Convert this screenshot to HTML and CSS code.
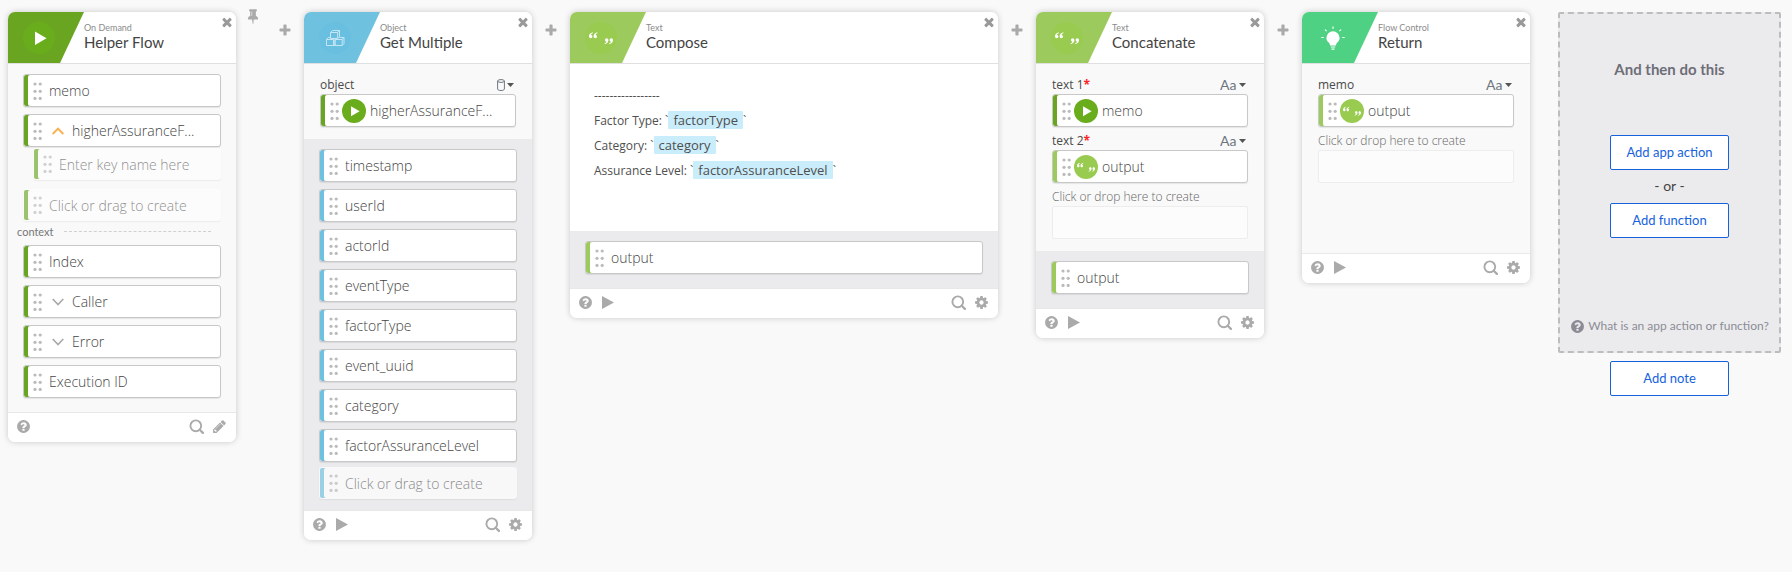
FILE: index.html
```html
<!DOCTYPE html>
<html lang="en">
<head>
<meta charset="utf-8">
<title>Helper Flow</title>
<link rel="stylesheet" href="styles.css">
</head>
<body>
<svg class="sprite" aria-hidden="true">
  <symbol id="close" viewBox="0 0 1792 1792"><path d="M1490 1322q0 40-28 68l-136 136q-28 28-68 28t-68-28l-294-294-294 294q-28 28-68 28t-68-28l-136-136q-28-28-28-68t28-68l294-294-294-294q-28-28-28-68t28-68l136-136q28-28 68-28t68 28l294 294 294-294q28-28 68-28t68 28l136 136q28 28 28 68t-28 68l-294 294 294 294q28 28 28 68z"/></symbol>
  <symbol id="plus" viewBox="0 0 14 14"><path d="M5.4 2.3q0-.8.8-.8h1.6q.8 0 .8.8v3.1h3.1q.8 0 .8.8v1.6q0 .8-.8.8H8.600v3.100q0 .8-.8.8H6.200q-.8 0-.8-.8V8.600H2.300q-.8 0-.8-.8V6.200q0-.8.8-.8h3.100z"/></symbol>
  <symbol id="pin" viewBox="0 0 1792 1792"><path d="M800 864v-448q0-14-9-23t-23-9-23 9-9 23v448q0 14 9 23t23 9 23-9 9-23zm672 352q0 26-19 45t-45 19h-429l-51 483q-2 12-10.500 20.500t-20.500 8.500h-1q-27 0-32-27l-76-485h-404q-26 0-45-19t-19-45q0-123 78.500-221.500t177.500-98.500v-512q-52 0-90-38t-38-90 38-90 90-38h640q52 0 90 38t38 90-38 90-90 38v512q99 0 177.500 98.500t78.500 221.500z"/></symbol>
  <symbol id="help" viewBox="0 0 1792 1792"><path d="M1024 1376v-192q0-14-9-23t-23-9h-192q-14 0-23 9t-9 23v192q0 14 9 23t23 9h192q14 0 23-9t9-23zm256-672q0-88-55.500-163t-138.500-116-170-41q-243 0-371 213-15 24 8 42l132 100q7 6 19 6 16 0 25-12 53-68 86-92 34-24 86-24 48 0 85.500 26t37.500 59q0 38-20 61t-68 45q-63 28-115.500 86.500t-52.500 125.500v36q0 14 9 23t23 9h192q14 0 23-9t9-23q0-19 21.500-49.500t54.500-49.500q32-18 49-28.500t46-35 44.500-48 28-60.500 12.500-81zm384 192q0 209-103 385.500t-279.500 279.500-385.500 103-385.500-103-279.500-279.500-103-385.500 103-385.500 279.500-279.500 385.500-103 385.500 103 279.500 279.500 103 385.500z"/></symbol>
  <symbol id="run" viewBox="0 0 15 15"><path d="M1 1 13 7.500 1 14z"/></symbol>
  <symbol id="search" viewBox="0 0 15 15"><g fill="none" stroke="currentColor"><circle cx="6.800" cy="6.800" r="5.400" stroke-width="1.900"/><path d="m10.700 10.700 3.200 3.200" stroke-width="2.200" stroke-linecap="round"/></g></symbol>
  <symbol id="gear" viewBox="0 0 1792 1792"><path d="M1152 896q0-106-75-181t-181-75-181 75-75 181 75 181 181 75 181-75 75-181zm512-109v222q0 12-8 23t-20 13l-185 28q-19 54-39 91 35 50 107 138 10 12 10 25t-9 23q-27 37-99 108t-94 71q-12 0-26-9l-138-108q-44 23-91 38-16 136-29 186-7 28-36 28h-222q-14 0-24.500-8.500t-11.500-21.500l-28-184q-49-16-90-37l-141 107q-10 9-25 9-14 0-25-11-126-114-165-168-7-10-7-23 0-12 8-23 15-21 51-66.500t54-70.500q-27-50-41-99l-183-27q-13-2-21-12.500t-8-23.500v-222q0-12 8-23t19-13l186-28q14-46 39-92-40-57-107-138-10-12-10-24 0-10 9-23 26-36 98.500-107.500t94.500-71.500q13 0 26 10l138 107q44-23 91-38 16-136 29-186 7-28 36-28h222q14 0 24.500 8.500t11.500 21.500l28 184q49 16 90 37l142-107q9-9 24-9 13 0 25 10 129 119 165 170 7 8 7 22 0 12-8 23-15 21-51 66.500t-54 70.500q26 50 41 98l183 28q13 2 21 12.500t8 23.500z"/></symbol>
  <symbol id="pencil" viewBox="0 0 1792 1792"><path d="M491 1536l91-91-235-235-91 91v107h128v128h107zm523-928q0-22-22-22-10 0-17 7l-542 542q-7 7-7 17 0 22 22 22 10 0 17-7l542-542q7-7 7-17zm-54-192l416 416-832 832h-416v-416zm683 96q0 53-37 90l-166 166-416-416 166-165q36-38 90-38 53 0 91 38l235 234q37 39 37 91z"/></symbol>
  <symbol id="grip" viewBox="0 0 10 18"><circle cx="2" cy="2" r="1.600"/><circle cx="7.200" cy="2" r="1.600"/><circle cx="2" cy="9.300" r="1.600"/><circle cx="7.200" cy="9.300" r="1.600"/><circle cx="2" cy="16.400" r="1.600"/><circle cx="7.200" cy="16.400" r="1.600"/></symbol>
  <symbol id="up" viewBox="0 0 12 8"><path d="m.7 7 5.300-5.500L11.300 7" fill="none" stroke="currentColor" stroke-width="1.900"/></symbol>
  <symbol id="down" viewBox="0 0 12 8"><path d="m.7 1 5.300 5.500L11.300 1" fill="none" stroke="currentColor" stroke-width="1.700"/></symbol>
  <symbol id="caret" viewBox="0 0 7 4"><path d="M0 0h7L3.500 4z"/></symbol>
  <symbol id="cylinder" viewBox="0 0 8 12"><g fill="none" stroke="currentColor"><path d="M.6 2v8c0 .9 1.500 1.500 3.400 1.500s3.400-.6 3.400-1.500V2"/><ellipse cx="4" cy="2" rx="3.400" ry="1.400"/></g></symbol>
  <symbol id="play" viewBox="0 0 32 32"><circle cx="16" cy="16" r="16" fill="#69ad1d"/><path d="M12 9.500 23.500 16.200 12 23z" fill="#fff"/></symbol>
  <symbol id="quotes" viewBox="0 0 32 32"><circle cx="16" cy="16" r="16" fill="#98cb50"/><g fill="#fff"><path id="q" d="M7.700 10.300C5.300 10.900 4 12.600 4 14.300c0 1.200.7 2 1.700 2s1.700-.7 1.700-1.700c0-.9-.6-1.500-1.400-1.600.2-.9.800-1.500 1.900-2z"/><use href="#q" x="4.600"/><use href="#q" transform="rotate(180 16 16.300)"/><use href="#q" transform="rotate(180 13.700 16.300)"/></g></symbol>
  <symbol id="cubes" viewBox="0 0 32 32"><circle cx="16" cy="16" r="16" fill="#68bfe0"/><g fill="none" stroke="#c4e6f4" stroke-width="1" stroke-linejoin="round"><path d="M11.500 10.500 13.500 8.500h7l-1.800 2v6h-7.200zM11.500 10.500h7.200M20.500 8.500v6.200l-1.800 1.800"/><path d="M7.500 17.500 9.300 15.500h2.200M7.500 17.500h7v6h-7zM14.500 17.500l1-1M16 17.500h7.200v6H16zM23.200 17.500l1.800-2h-4.500M25 15.500v6l-1.800 2M16 17.500v6h-1.500"/></g></symbol>
  <symbol id="bulb" viewBox="0 0 32 32"><path d="M16 9.300a6.600 6.600 0 0 1 6.600 6.600c0 2.200-1.200 3.500-2.300 4.700-.8.900-1.300 1.700-1.400 2.800h-5.800c-.1-1.100-.6-1.900-1.400-2.800-1.100-1.200-2.300-2.500-2.300-4.700A6.600 6.600 0 0 1 16 9.300z" fill="#fff"/><g fill="none" stroke="#fff" stroke-width="1.200"><path d="M13.800 25h4.400M14.500 27.200h3M16 4.500v2.200M4.300 15.500h2.400M25.300 15.500h2.400M8 7.600l1.600 1.500M24 7.600l-1.600 1.500"/></g></symbol>
</svg>

<main class="flow">
  <article class="card green">
    <header class="head">
      <span class="badge"><svg class="logo"><use href="#play"/></svg></span>
      <div class="titles"><p class="kind">On Demand</p><h2 class="name">Helper Flow</h2></div>
      <button class="icon close" aria-label="Remove"><svg><use href="#close"/></svg></button>
    </header>
    <div class="list start">
      <div class="pill"><svg class="grip"><use href="#grip"/></svg>memo</div>
      <div class="pill"><svg class="grip"><use href="#grip"/></svg><svg class="chevron open"><use href="#up"/></svg>higherAssuranceF...</div>
      <label class="pill blank nested"><svg class="grip"><use href="#grip"/></svg><input placeholder="Enter key name here" aria-label="Key name"></label>
      <label class="pill blank"><svg class="grip"><use href="#grip"/></svg><input placeholder="Click or drag to create" aria-label="New output"></label>
      <h3 class="context">context</h3>
      <div class="pill"><svg class="grip"><use href="#grip"/></svg>Index</div>
      <div class="pill"><svg class="grip"><use href="#grip"/></svg><svg class="chevron"><use href="#down"/></svg>Caller</div>
      <div class="pill"><svg class="grip"><use href="#grip"/></svg><svg class="chevron"><use href="#down"/></svg>Error</div>
      <div class="pill"><svg class="grip"><use href="#grip"/></svg>Execution ID</div>
    </div>
    <footer class="foot">
      <button class="icon" aria-label="Help"><svg><use href="#help"/></svg></button>
      <span class="space"></span>
      <button class="icon" aria-label="Search"><svg><use href="#search"/></svg></button>
      <button class="icon" aria-label="Edit"><svg><use href="#pencil"/></svg></button>
    </footer>
  </article>

  <div class="gap wide">
    <button class="icon pin" aria-label="Pin"><svg><use href="#pin"/></svg></button>
    <button class="icon add" aria-label="Insert card"><svg><use href="#plus"/></svg></button>
  </div>

  <article class="card blue">
    <header class="head">
      <span class="badge"><svg class="logo"><use href="#cubes"/></svg></span>
      <div class="titles"><p class="kind">Object</p><h2 class="name">Get Multiple</h2></div>
      <button class="icon close" aria-label="Remove"><svg><use href="#close"/></svg></button>
    </header>
    <div class="fields">
      <div class="caption"><label for="object">object</label><button class="type" aria-label="Type"><svg class="cylinder"><use href="#cylinder"/></svg><svg class="caret"><use href="#caret"/></svg></button></div>
      <div class="pill green"><svg class="grip"><use href="#grip"/></svg><svg class="source"><use href="#play"/></svg><input id="object" value="higherAssuranceF..." readonly></div>
    </div>
    <div class="list outputs">
      <div class="pill"><svg class="grip"><use href="#grip"/></svg>timestamp</div>
      <div class="pill"><svg class="grip"><use href="#grip"/></svg>userId</div>
      <div class="pill"><svg class="grip"><use href="#grip"/></svg>actorId</div>
      <div class="pill"><svg class="grip"><use href="#grip"/></svg>eventType</div>
      <div class="pill"><svg class="grip"><use href="#grip"/></svg>factorType</div>
      <div class="pill"><svg class="grip"><use href="#grip"/></svg>event_uuid</div>
      <div class="pill"><svg class="grip"><use href="#grip"/></svg>category</div>
      <div class="pill"><svg class="grip"><use href="#grip"/></svg>factorAssuranceLevel</div>
      <label class="pill blank"><svg class="grip"><use href="#grip"/></svg><input placeholder="Click or drag to create" aria-label="New output"></label>
    </div>
    <footer class="foot">
      <button class="icon" aria-label="Help"><svg><use href="#help"/></svg></button>
      <button class="icon" aria-label="Run"><svg><use href="#run"/></svg></button>
      <span class="space"></span>
      <button class="icon" aria-label="Search"><svg><use href="#search"/></svg></button>
      <button class="icon" aria-label="Settings"><svg><use href="#gear"/></svg></button>
    </footer>
  </article>

  <div class="gap"><button class="icon add" aria-label="Insert card"><svg><use href="#plus"/></svg></button></div>

  <article class="card lime roomy">
    <header class="head">
      <span class="badge"><svg class="logo"><use href="#quotes"/></svg></span>
      <div class="titles"><p class="kind">Text</p><h2 class="name">Compose</h2></div>
      <button class="icon close" aria-label="Remove"><svg><use href="#close"/></svg></button>
    </header>
    <div class="editor" contenteditable="true" role="textbox" aria-label="Message" spellcheck="false">
      <p>-----------------</p>
      <p>Factor Type: `<span class="token">factorType</span>`</p>
      <p>Category: `<span class="token">category</span>`</p>
      <p>Assurance Level: `<span class="token">factorAssuranceLevel</span>`</p>
    </div>
    <div class="list outputs">
      <div class="pill"><svg class="grip"><use href="#grip"/></svg>output</div>
    </div>
    <footer class="foot">
      <button class="icon" aria-label="Help"><svg><use href="#help"/></svg></button>
      <button class="icon" aria-label="Run"><svg><use href="#run"/></svg></button>
      <span class="space"></span>
      <button class="icon" aria-label="Search"><svg><use href="#search"/></svg></button>
      <button class="icon" aria-label="Settings"><svg><use href="#gear"/></svg></button>
    </footer>
  </article>

  <div class="gap"><button class="icon add" aria-label="Insert card"><svg><use href="#plus"/></svg></button></div>

  <article class="card lime">
    <header class="head">
      <span class="badge"><svg class="logo"><use href="#quotes"/></svg></span>
      <div class="titles"><p class="kind">Text</p><h2 class="name">Concatenate</h2></div>
      <button class="icon close" aria-label="Remove"><svg><use href="#close"/></svg></button>
    </header>
    <div class="fields">
      <div class="caption"><label for="text1">text 1<b class="must">*</b></label><span class="type"><select aria-label="Type of text 1"><option>Aa</option></select><svg class="caret"><use href="#caret"/></svg></span></div>
      <div class="pill green"><svg class="grip"><use href="#grip"/></svg><svg class="source"><use href="#play"/></svg><input id="text1" value="memo" readonly></div>
      <div class="caption"><label for="text2">text 2<b class="must">*</b></label><span class="type"><select aria-label="Type of text 2"><option>Aa</option></select><svg class="caret"><use href="#caret"/></svg></span></div>
      <div class="pill"><svg class="grip"><use href="#grip"/></svg><svg class="source"><use href="#quotes"/></svg><input id="text2" value="output" readonly></div>
      <div class="caption"><label class="faint" for="text3">Click or drop here to create</label></div>
      <input class="drop" id="text3">
    </div>
    <div class="list outputs">
      <div class="pill"><svg class="grip"><use href="#grip"/></svg>output</div>
    </div>
    <footer class="foot">
      <button class="icon" aria-label="Help"><svg><use href="#help"/></svg></button>
      <button class="icon" aria-label="Run"><svg><use href="#run"/></svg></button>
      <span class="space"></span>
      <button class="icon" aria-label="Search"><svg><use href="#search"/></svg></button>
      <button class="icon" aria-label="Settings"><svg><use href="#gear"/></svg></button>
    </footer>
  </article>

  <div class="gap"><button class="icon add" aria-label="Insert card"><svg><use href="#plus"/></svg></button></div>

  <article class="card emerald">
    <header class="head">
      <span class="badge"><svg class="logo"><use href="#bulb"/></svg></span>
      <div class="titles"><p class="kind">Flow Control</p><h2 class="name">Return</h2></div>
      <button class="icon close" aria-label="Remove"><svg><use href="#close"/></svg></button>
    </header>
    <div class="fields last">
      <div class="caption"><label for="memo">memo</label><span class="type"><select aria-label="Type of memo"><option>Aa</option></select><svg class="caret"><use href="#caret"/></svg></span></div>
      <div class="pill lime"><svg class="grip"><use href="#grip"/></svg><svg class="source"><use href="#quotes"/></svg><input id="memo" value="output" readonly></div>
      <div class="caption"><label class="faint" for="memo2">Click or drop here to create</label></div>
      <input class="drop" id="memo2">
    </div>
    <footer class="foot">
      <button class="icon" aria-label="Help"><svg><use href="#help"/></svg></button>
      <button class="icon" aria-label="Run"><svg><use href="#run"/></svg></button>
      <span class="space"></span>
      <button class="icon" aria-label="Search"><svg><use href="#search"/></svg></button>
      <button class="icon" aria-label="Settings"><svg><use href="#gear"/></svg></button>
    </footer>
  </article>

  <aside class="next">
    <section class="choose">
      <h2 class="prompt">And then do this</h2>
      <button class="action">Add app action</button>
      <span class="or">- or -</span>
      <button class="action">Add function</button>
      <a class="what" href="#"><svg><use href="#help"/></svg>What is an app action or function?</a>
    </section>
    <button class="action">Add note</button>
  </aside>
</main>
</body>
</html>
```

FILE: styles.css
```css
:root {
  --display: "Lato", "Liberation Sans", sans-serif;
  --text: "Open Sans", "Noto Sans", sans-serif;
}

* { box-sizing: border-box; }

body {
  margin: 0;
  background: #f9f9f9;
  color: #444;
  font-family: var(--text);
}

h2, h3, p { margin: 0; }

button, input, select { font: inherit; color: inherit; }

svg { display: block; fill: currentColor; }

.sprite { position: absolute; width: 0; height: 0; }

.flow {
  display: flex;
  align-items: flex-start;
  padding: 12px 11px 12px 8px;
}

/* Cards */
.card {
  flex: 0 0 228px;
  border-radius: 7px;
  background: #f9f9f9;
  box-shadow: 0 0 6px rgba(0, 0, 0, .2);
  overflow: hidden;
}

.roomy { flex: 1 1 320px; }

.green { --accent: #69a521; }
.blue { --accent: #6fc1e0; }
.lime { --accent: #9dca5c; }
.emerald { --accent: #4fd184; }

.head {
  display: flex;
  height: 52px;
  border-bottom: 1px solid #e0e0e0;
  background: #fff;
}

.badge {
  display: flex;
  align-items: center;
  width: 76px;
  padding-left: 15px;
  background: var(--accent);
  clip-path: polygon(0 0, 100% 0, 52px 100%, 0 100%);
}

.logo { width: 32px; height: 32px; }

.titles { flex: 1; padding-top: 10px; font-family: var(--display); }

.kind { font-size: 9px; line-height: 12px; color: #8b8b8b; }

.name { font-size: 15px; line-height: 17px; font-weight: 400; color: #444; }

.icon {
  padding: 0;
  border: 0;
  background: none;
  color: #aaa;
  cursor: pointer;
}

.icon svg { width: 15px; height: 15px; }

.close { align-self: flex-start; padding: 3px 2px 0 0; color: #999; }

.close svg { width: 14px; height: 14px; }

.gap {
  display: flex;
  flex: 0 0 38px;
  justify-content: center;
  padding-top: 11px;
}

.gap.wide { flex-basis: 68px; justify-content: flex-end; gap: 17px; padding-right: 12px; }

.add svg { width: 14px; height: 14px; }

.pin { align-self: flex-start; margin-top: -15px; }

.pin svg { width: 16px; height: 16px; }

/* Rows inside cards */
.list {
  display: flex;
  flex-direction: column;
  gap: 7px;
  padding: 10px 15px 14px;
}

.outputs { background: #ebebed; }

.blue .outputs { padding-bottom: 11px; }

.pill {
  display: flex;
  align-items: center;
  height: 33px;
  padding-left: 9px;
  border: 1px solid #c8c8c8;
  border-radius: 3px;
  background: #fff;
  box-shadow: inset 4px 0 var(--accent), 0 1px 1px rgba(0, 0, 0, .08);
  font-size: 14px;
  font-weight: 300;
  white-space: nowrap;
}

.pill input {
  flex: 1;
  min-width: 0;
  padding: 0;
  border: 0;
  outline: 0;
  background: none;
}

.pill input::placeholder { color: #555; opacity: 1; }

.blank { height: 32px; border-color: transparent; opacity: .65; }

.outputs .blank { margin-top: -2px; }

.nested { margin: -6px 0 2px 10px; }

.grip { width: 10px; height: 18px; margin-right: 6px; color: #bbb; }

.chevron { width: 12px; height: 8px; margin: 0 8px 0 3px; color: #aaa; }

.chevron.open { color: #f9b04e; }

.source { width: 24px; height: 24px; margin: 0 4px 0 -4px; }

.context {
  display: flex;
  align-items: center;
  gap: 10px;
  margin: -5px 10px -2px -6px;
  font-family: var(--display);
  font-size: 11px;
  line-height: 17px;
  font-weight: 400;
  color: #777;
}

.context::after { content: ""; flex: 1; border-top: 1px dashed #d0d0d0; }

/* Input fields */
.fields {
  display: flex;
  flex-direction: column;
  padding: 7px 16px 12px;
}

.last { padding-bottom: 70px; }

.caption {
  display: flex;
  justify-content: space-between;
  align-items: center;
  height: 23px;
  padding-top: 4px;
  font-size: 12px;
  line-height: 16px;
  color: #4a4a4a;
}

.must { color: #f22; }

.faint { font-weight: 300; color: #666; }

.type {
  display: flex;
  align-items: center;
  gap: 2px;
  padding: 0 2px 0 0;
  border: 0;
  background: none;
  color: #6e7780;
}

.type select {
  padding: 0;
  border: 0;
  background: none;
  appearance: none;
  font-family: var(--display);
  font-size: 14px;
  line-height: 16px;
}

.cylinder { width: 8px; height: 12px; }

.caret { width: 7px; height: 4px; color: #555; }

.drop {
  width: 100%;
  height: 33px;
  border: 1px solid #ededed;
  border-radius: 2px;
  background: #fcfcfc;
}

/* Compose editor */
.editor {
  padding: 19px 24px 48px;
  background: #fff;
  font-size: 12px;
  line-height: 25px;
  color: #4f4f4f;
  outline: 0;
}

.token {
  padding: 0 5px;
  border-radius: 1px;
  background: #caedfc;
  font-size: 13px;
  line-height: 18px;
}

.foot {
  display: flex;
  align-items: center;
  gap: 8px;
  height: 30px;
  padding: 0 9px 2px 8px;
  border-top: 1px solid #e8e8e8;
  background: #fff;
}

.space { flex: 1; }

/* Next step */
.next {
  display: flex;
  flex: 0 0 223px;
  flex-direction: column;
  align-items: center;
  gap: 8px;
  margin-left: 28px;
  font-family: var(--display);
}

.choose {
  display: flex;
  flex-direction: column;
  align-items: center;
  width: 100%;
  padding: 45px 8px 16px;
  border: 2px dashed #bdbdbd;
  border-radius: 2px;
  background: #ebebed;
}

.prompt { margin-bottom: 56px; font-size: 15px; line-height: 20px; color: #6e6e78; }

.action {
  width: 119px;
  height: 35px;
  padding: 0 0 2px;
  border: 1px solid #1662dd;
  border-radius: 2px;
  background: #fff;
  color: #1662dd;
  font-size: 13px;
  cursor: pointer;
}

.or { padding: 6px 0 7px; font-size: 14px; line-height: 20px; }

.what {
  display: flex;
  align-items: center;
  gap: 3px;
  margin-top: 79px;
  font-size: 12px;
  line-height: 18px;
  color: #8c8c96;
  text-decoration: none;
  white-space: nowrap;
}

.what svg { width: 15px; height: 15px; }
```
